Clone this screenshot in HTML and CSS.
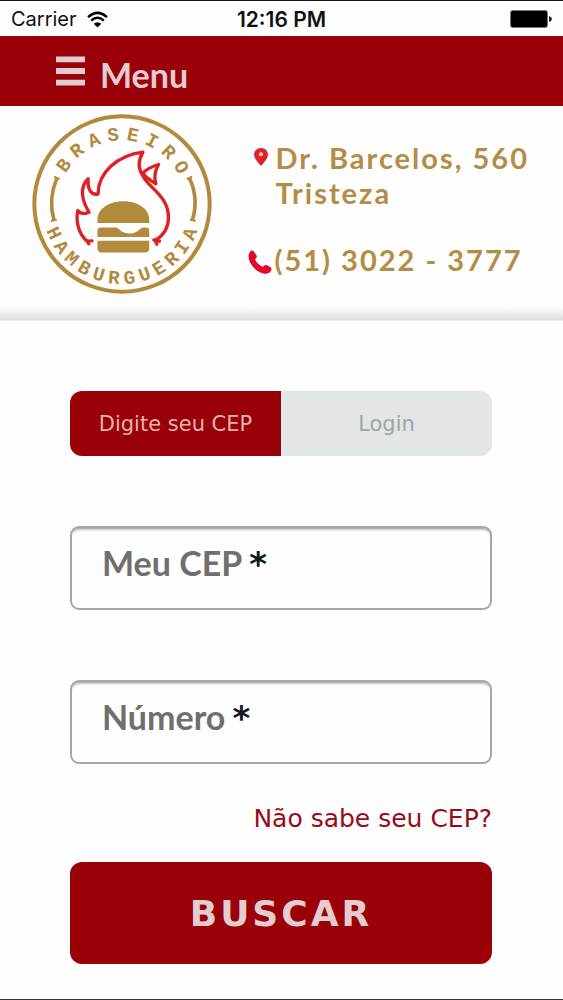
FILE: index.html
```
<!DOCTYPE html>
<html lang="pt-BR">
<head>
  <meta charset="utf-8">
  <meta name="viewport" content="width=device-width, initial-scale=1">
  <title>Braseiro Hamburgueria</title>
  <link rel="stylesheet" href="styles.css">
</head>
<body>
  <div class="status-bar">
    <div class="carrier">
      <span>Carrier</span>
      <svg class="wifi" viewBox="0 0 60 48" aria-hidden="true">
        <path d="M3 17 Q30 -7 57 17" fill="none" stroke="#000" stroke-width="7"/>
        <path d="M12 27 Q30 11 48 27" fill="none" stroke="#000" stroke-width="7"/>
        <path d="M19 36 Q30 27 41 36 L30 47 Z" fill="#000"/>
      </svg>
    </div>
    <span class="clock">12:16 PM</span>
    <div class="battery-box">
      <svg class="battery" viewBox="0 0 42 18" aria-hidden="true">
        <rect x="0" y="0" width="38" height="18" rx="3" fill="#777"/>
        <rect x="1" y="1" width="36" height="16" rx="2" fill="#000"/>
        <path d="M39 6 Q42 7 42 9 Q42 11 39 12 Z" fill="#222"/>
      </svg>
    </div>
  </div>

  <nav class="navbar">
    <button type="button" class="menu-button">
      <svg class="menu-icon" viewBox="0 0 30 30" aria-hidden="true">
        <path d="M0 0h30v6H0z M0 12h30v6H0z M0 24h30v6H0z" fill="#e3cdd1"/>
      </svg>
      <span>Menu</span>
    </button>
  </nav>

  <header class="header">
    <svg class="logo" viewBox="36 26 542 542" role="img" aria-label="Braseiro Hamburgueria">
      <defs>
        <path id="arc-top" d="M115 297 A192 192 0 0 1 499 297"/>
        <path id="arc-bottom" d="M66 297 A241 241 0 0 0 548 297"/>
      </defs>
      <circle cx="307" cy="297" r="264" fill="none" stroke="#b38a3c" stroke-width="12"/>

      <text class="logo-text logo-text-top"><textPath href="#arc-top" startOffset="52%">BRASEIRO</textPath></text>
      <text class="logo-text logo-text-bottom"><textPath href="#arc-bottom" startOffset="51%">HAMBURGUERIA</textPath></text>

      <!-- side brackets -->
      <g fill="none" stroke="#b38a3c">
        <path d="M111 219 Q84 282 102 345" stroke-width="11"/>
        <path d="M103 215 L119 222 M93 348 L111 344" stroke-width="6"/>
        <path d="M510 219 Q539 282 519 345" stroke-width="11"/>
        <path d="M502 222 L518 215 M511 344 L529 348" stroke-width="6"/>
      </g>

      <!-- flame -->
      <g fill="none" stroke="#df2126" stroke-width="10" stroke-linejoin="round" stroke-linecap="round">
        <path d="M217 408 L202 409 C177 389 167 350 174 317 C183 327 195 328 208 322 C187 289 177 247 205 221 C203 252 213 271 235 267 C235 202 292 151 370 141 C353 170 355 192 371 214 C388 249 447 273 447 338 C447 370 432 392 407 407"/>
        <path d="M202 409 L207 417 M403 405 L420 409 M407 407 L412 418"/>
        <path d="M370 204 C380 192 398 184 417 178 C406 197 403 217 409 236 C392 226 378 216 370 204"/>
      </g>

      <!-- burger -->
      <g fill="#b38a3c">
        <path d="M233 354 V343 C235 307 274 289 311 289 C349 289 387 307 389 343 V354 Z"/>
        <path d="M243 368 H288 C299 369 303 386 330 386 C357 386 359 369 371 368 H379 Q389 368 389 378 V396 H233 V378 Q233 368 243 368 Z"/>
        <path d="M233 408 H389 V431 Q388 443 377 443 H245 Q234 443 233 431 Z"/>
      </g>
    </svg>

    <address class="contact">
      <div class="contact-row">
        <svg class="pin" viewBox="0 0 40 52" aria-hidden="true">
          <path d="M20 0 C8 0 0 9 0 19 C0 31 10 40 20 52 C30 40 40 31 40 19 C40 9 32 0 20 0 Z" fill="#df2126"/>
          <circle cx="20" cy="18" r="6" fill="#f7c9c9"/>
        </svg>
        <span>Dr. Barcelos, 560<br>Tristeza</span>
      </div>
      <div class="contact-row">
        <svg class="phone" viewBox="0 0 70 72" aria-hidden="true">
          <path d="M5 6 C9 0 14 1 17 5 L24 15 C27 20 25 23 20 28 C24 38 33 47 44 51 C48 46 51 44 56 46 L67 52 C71 56 70 61 66 65 C58 73 47 72 38 68 C18 60 4 42 1 23 C0 16 1 11 5 6 Z" fill="#e3062e"/>
        </svg>
        <span>(51) 3022 - 3777</span>
      </div>
    </address>
  </header>

  <main class="content">
    <div class="tabs" role="tablist">
      <button type="button" class="tab active" role="tab" aria-selected="true">Digite seu CEP</button>
      <button type="button" class="tab" role="tab" aria-selected="false">Login</button>
    </div>

    <form class="cep-form">
      <div class="field">
        <label for="cep">Meu CEP<span class="required">*</span></label>
        <input type="text" id="cep" name="cep" required>
      </div>
      <div class="field">
        <label for="numero">Número<span class="required">*</span></label>
        <input type="text" id="numero" name="numero" required>
      </div>
      <a href="#" class="help-link">Não sabe seu CEP?</a>
      <button type="submit" class="submit">BUSCAR</button>
    </form>
  </main>
</body>
</html>
```
FILE: styles.css
```
* {
  box-sizing: border-box;
}
body {
  margin: 0;
  min-height: 100vh;
  border-top: 1px solid #1c1418;
  border-bottom: 1px solid #333;
  background: #fefefe;
  font-family: "DejaVu Sans", Verdana, sans-serif;
}
button, input {
  font-family: inherit;
  border: 0;
  margin: 0;
}
button {
  cursor: pointer;
}

/* Status bar */
.status-bar {
  display: grid;
  grid-template-columns: 1fr auto 1fr;
  align-items: center;
  height: 35px;
  padding: 1px 11px 0 11px;
  font-family: Inter, "Liberation Sans", sans-serif;
  font-size: 21px;
  color: #111;
}
.carrier {
  display: flex;
  align-items: center;
  gap: 10px;
  font-family: Inter, "Liberation Sans", sans-serif;
  font-size: 20px;
}
.wifi {
  width: 21px;
  height: 17px;
}
.clock {
  font-weight: 600;
}
.battery-box {
  display: flex;
  justify-content: flex-end;
}
.battery {
  width: 42px;
  height: 18px;
}

/* Menu */
.navbar {
  height: 70px;
  padding: 0 56px;
  background: #990007;
}
.menu-button {
  display: flex;
  gap: 15px;
  height: 70px;
  padding: 20px 0 0;
  background: none;
  color: #e3cdd1;
  font-family: Lato, "Trebuchet MS", sans-serif;
  font-size: 34px;
  font-weight: 700;
  line-height: 38px;
}
.menu-icon {
  width: 29px;
  height: 30px;
}

/* Logo + contact */
.header {
  display: flex;
  justify-content: space-between;
  align-items: flex-start;
  height: 215px;
  padding: 8px 34px 0 32px;
  background: linear-gradient(#fefefe 200px, #f4f2f5 205px, #dedbdf 214px, #fefefe 215px);
}
.logo {
  width: 180px;
  height: 180px;
}
.logo-text {
  font-family: "Liberation Mono", monospace;
  font-size: 58px;
  font-weight: 700;
  text-anchor: middle;
  fill: #b38a3c;
}
.logo-text-top {
  letter-spacing: 20px;
}
.logo-text-bottom {
  letter-spacing: 16px;
}
.contact {
  display: flex;
  flex-direction: column;
  gap: 32px;
  padding-top: 26px;
  font-family: Lato, sans-serif;
  font-size: 29px;
  font-style: normal;
  font-weight: 700;
  line-height: 35px;
  letter-spacing: 2px;
  color: #b38d45;
}
.contact-row {
  display: flex;
}
.pin {
  width: 14px;
  height: 18px;
  margin: 8px 8px 0 6px;
}
.phone {
  width: 24px;
  height: 24px;
  margin: 8px 3px 0 0;
}

/* Form */
.content {
  padding: 70px 71px 35px 70px;
}
.tabs {
  display: flex;
  height: 65px;
  border-radius: 12px;
  overflow: hidden;
}
.tab {
  flex: 1;
  padding: 0;
  background: #e3e6e7;
  color: #9da7a7;
  font-size: 21px;
}
.tab.active {
  background: #990007;
  color: #e6b3ac;
}
.cep-form {
  display: flex;
  flex-direction: column;
}
.field {
  display: flex;
  height: 84px;
  margin-top: 70px;
  padding: 0 16px 0 30px;
  border: 2px solid #a3a7a7;
  border-radius: 9px;
  background: #fefefe;
  box-shadow: inset 0 4px 3px -3px #888;
}
.field label {
  padding-top: 12px;
  font-family: Lato, "Trebuchet MS", sans-serif;
  font-size: 34px;
  font-weight: 700;
  line-height: 46px;
  white-space: nowrap;
  color: #6f6f70;
}
.required {
  margin-left: 7px;
  font-family: "DejaVu Sans", Verdana, sans-serif;
  color: #101a24;
}
.field input {
  flex: 1;
  min-width: 0;
  outline: none;
  background: none;
  font-size: 32px;
}
.help-link {
  align-self: flex-end;
  margin-top: 39px;
  font-size: 25px;
  line-height: 32px;
  color: #9b0a16;
  text-decoration: none;
}
.submit {
  height: 102px;
  margin-top: 27px;
  padding: 0;
  border-radius: 12px;
  background: #990007;
  color: #e3cdd1;
  font-size: 36px;
  font-weight: 700;
  letter-spacing: 3px;
}
```
